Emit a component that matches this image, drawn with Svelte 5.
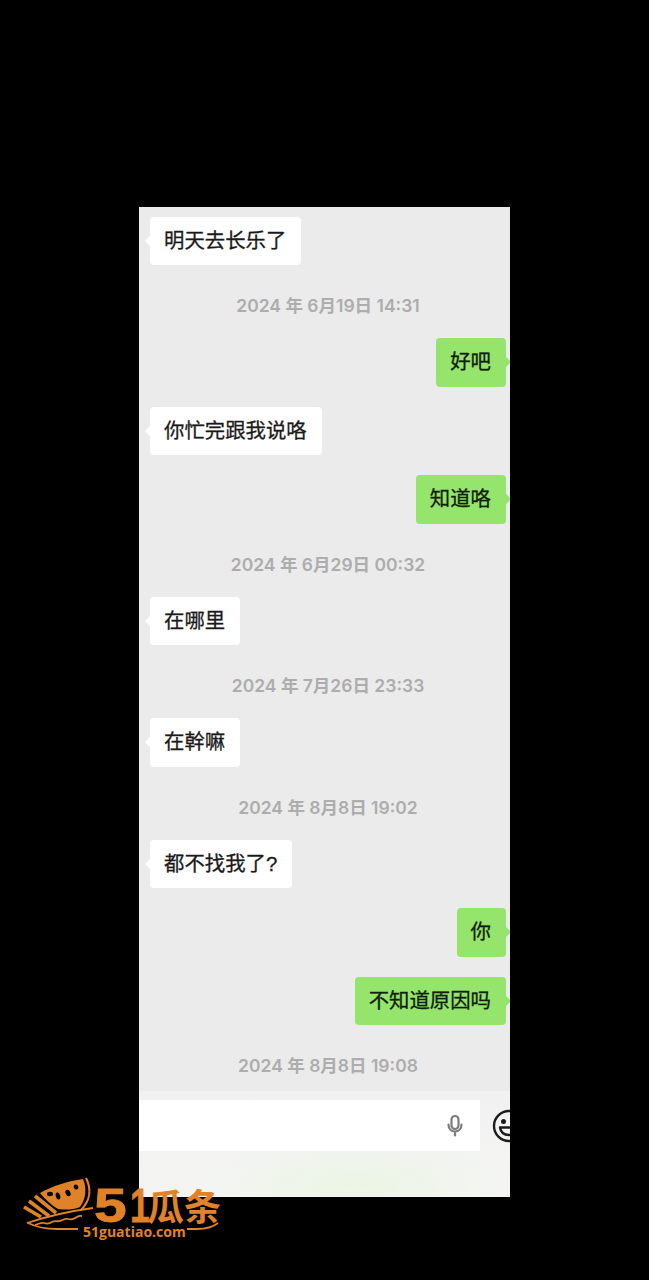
<script lang="ts">
  type Item =
    | { kind: 'time'; text: string }
    | { kind: 'in' | 'out'; text: string };

  const items: Item[] = [
    { kind: 'in', text: '明天去长乐了' },
    { kind: 'time', text: '2024 年 6月19日 14:31' },
    { kind: 'out', text: '好吧' },
    { kind: 'in', text: '你忙完跟我说咯' },
    { kind: 'out', text: '知道咯' },
    { kind: 'time', text: '2024 年 6月29日 00:32' },
    { kind: 'in', text: '在哪里' },
    { kind: 'time', text: '2024 年 7月26日 23:33' },
    { kind: 'in', text: '在幹嘛' },
    { kind: 'time', text: '2024 年 8月8日 19:02' },
    { kind: 'in', text: '都不找我了?' },
    { kind: 'out', text: '你' },
    { kind: 'out', text: '不知道原因吗' },
    { kind: 'time', text: '2024 年 8月8日 19:08' },
  ];
</script>

<div class="page">
  <div class="phone">
    <div class="messages">
      {#each items as item}
        {#if item.kind === 'time'}
          <div class="time">{item.text}</div>
        {:else}
          <div class="row {item.kind}">
            <div class="bubble">{item.text}</div>
          </div>
        {/if}
      {/each}
    </div>
    <div class="composer">
      <div class="inputbar">
        <div class="input">
          <svg class="mic" viewBox="0 0 20 24" width="20" height="24">
            <rect x="6.5" y="2" width="7" height="13" rx="3.5" fill="none" stroke="#7c7c7c" stroke-width="2.2" />
            <path d="M3.5 10.5c0 4.2 2.8 7 6.500 7s6.500-2.800 6.500-7M10 17.500v4" fill="none" stroke="#7c7c7c" stroke-width="2.200" stroke-linecap="round" />
          </svg>
        </div>
        <svg class="smile" viewBox="0 0 34 34" width="34" height="34">
          <circle cx="17" cy="17" r="15" fill="none" stroke="#1c1c1c" stroke-width="2.400" />
          <circle cx="11.500" cy="12.500" r="2.500" fill="#1c1c1c" />
          <circle cx="22.500" cy="12.500" r="2.500" fill="#1c1c1c" />
          <path d="M8 18.500h18c-.8 5-4.500 7.500-9 7.500S8.800 23.500 8 18.500z" fill="none" stroke="#1c1c1c" stroke-width="2.400" stroke-linejoin="round" />
        </svg>
      </div>
      <div class="homebar"></div>
    </div>
  </div>

  <div class="logo">
    <svg viewBox="0 0 205 65" width="205" height="65">
      <path d="M19 18C31 11 47 6 62 4c4 9 3 20-3 28-7 3-15 3-22 2-7-4-13-10-18-16z" fill="#e08227" />
      <g fill="none" stroke="#e08227">
        <path d="M65 3c5 10 5 22-5 32" stroke-width="2.200" />
        <path d="M14 21l21 17M8 26l20 15M3 32l17 10" stroke-width="3.600" />
        <path d="M6 48c18-6 44-12 66-15" stroke-width="1.800" />
        <path d="M14 50c4-1 6-3 9-2s5 1 8-1 5 0 8-1 5-3 8-2 6 0 9-2 4-1 5-1" stroke-width="1.800" />
        <path d="M7 48c8 4 18 6 29 6h21" stroke-width="1.800" />
        <path d="M166 54h10c8 0 16-2 21-6" stroke-width="1.800" />
      </g>
      <g fill="#000">
        <ellipse cx="29" cy="19" rx="3" ry="2.200" />
        <ellipse cx="37" cy="21" rx="2.200" ry="3.600" transform="rotate(-15 37 21)" />
        <ellipse cx="47" cy="18" rx="2.400" ry="3.400" transform="rotate(-25 47 18)" />
        <ellipse cx="55" cy="12" rx="2.200" ry="2.600" transform="rotate(-25 55 12)" />
      </g>
    </svg>
    <span class="logo-name"><span class="five">5</span><span class="one">1</span><span class="cjk">瓜条</span></span>
    <span class="logo-url">51guatiao.com</span>
  </div>
</div>

<style>
  :global(body) {
    margin: 0;
    background: #000;
  }

  .page {
    position: relative;
    height: 1280px;
    padding-top: 207px;
    box-sizing: border-box;
    font-family: "Liberation Sans", "Noto Sans CJK SC", sans-serif;
    overflow: hidden;
  }

  .phone {
    width: 371px;
    height: 990px;
    margin-left: 139px;
    background: #ebebeb;
    display: flex;
    flex-direction: column;
    overflow: hidden;
  }

  .messages {
    flex: 1;
    padding: 9.500px 4px 0 11px;
    display: flex;
    flex-direction: column;
    min-height: 0;
  }

  .time {
    height: 20px;
    line-height: 20px;
    margin: 31px 0 22px;
    text-align: center;
    font-family: Inter, "Noto Sans CJK SC", sans-serif;
    font-size: 17.500px;
    font-weight: 600;
    color: #adadad;
    white-space: nowrap;
  }

  .row {
    display: flex;
  }

  .row + .row {
    margin-top: 20px;
  }

  .row.out {
    justify-content: flex-end;
  }

  .bubble {
    position: relative;
    height: 48.500px;
    line-height: 49px;
    padding: 0 15px 0 14px;
    border-radius: 4px;
    font-size: 20.400px;
    color: #1a1a1a;
    -webkit-text-stroke: 0.3px currentColor;
    white-space: nowrap;
  }

  .row.in .bubble {
    background: #fff;
  }

  .row.out .bubble {
    background: #95e46b;
    color: #10200a;
  }

  .bubble::after {
    content: '';
    position: absolute;
    top: 19px;
    width: 0;
    height: 0;
    border: 5px solid transparent;
  }

  .row.in .bubble::after {
    left: -5px;
    border-left: 0;
    border-right-color: #fff;
  }

  .row.out .bubble::after {
    right: -5px;
    border-right: 0;
    border-left-color: #95e46b;
  }

  .composer {
    height: 106px;
    flex-shrink: 0;
    display: flex;
    flex-direction: column;
    background: linear-gradient(#f1f1f1, #f4f5f3);
  }

  .inputbar {
    display: flex;
    align-items: center;
    gap: 12px;
    padding-top: 9px;
  }

  .input {
    width: 341px;
    height: 51px;
    flex-shrink: 0;
    background: #fff;
    display: flex;
    align-items: center;
    justify-content: flex-end;
    padding-right: 15px;
    box-sizing: border-box;
  }

  .smile {
    flex-shrink: 0;
  }

  .homebar {
    flex: 1;
    background: radial-gradient(ellipse 150px 44px at 58% 75%, #ebf5e4, transparent);
  }

  .logo {
    position: absolute;
    left: 21px;
    top: 1175px;
    width: 205px;
    height: 65px;
    color: #e08227;
  }

  .logo svg {
    position: absolute;
    left: 0;
    top: 0;
  }

  .logo-name {
    position: absolute;
    left: 73px;
    top: 12px;
    height: 36px;
    display: flex;
    align-items: center;
    font-weight: 700;
    font-size: 49px;
    line-height: 36px;
    white-space: nowrap;
  }

  .five {
    display: inline-block;
    width: 36px;
    transform: scaleX(1.2);
    transform-origin: left center;
    -webkit-text-stroke: 0.8px currentColor;
  }

  .one {
    display: inline-block;
    width: 17px;
    transform: scaleX(0.72);
    transform-origin: left center;
    -webkit-text-stroke: 0.8px currentColor;
  }

  .cjk {
    font-family: "Noto Sans CJK SC", sans-serif;
    font-size: 37px;
  }

  .logo-url {
    position: absolute;
    left: 62px;
    top: 49px;
    font-family: "Open Sans", sans-serif;
    font-weight: 700;
    font-size: 14px;
    line-height: 15px;
    white-space: nowrap;
  }
</style>
